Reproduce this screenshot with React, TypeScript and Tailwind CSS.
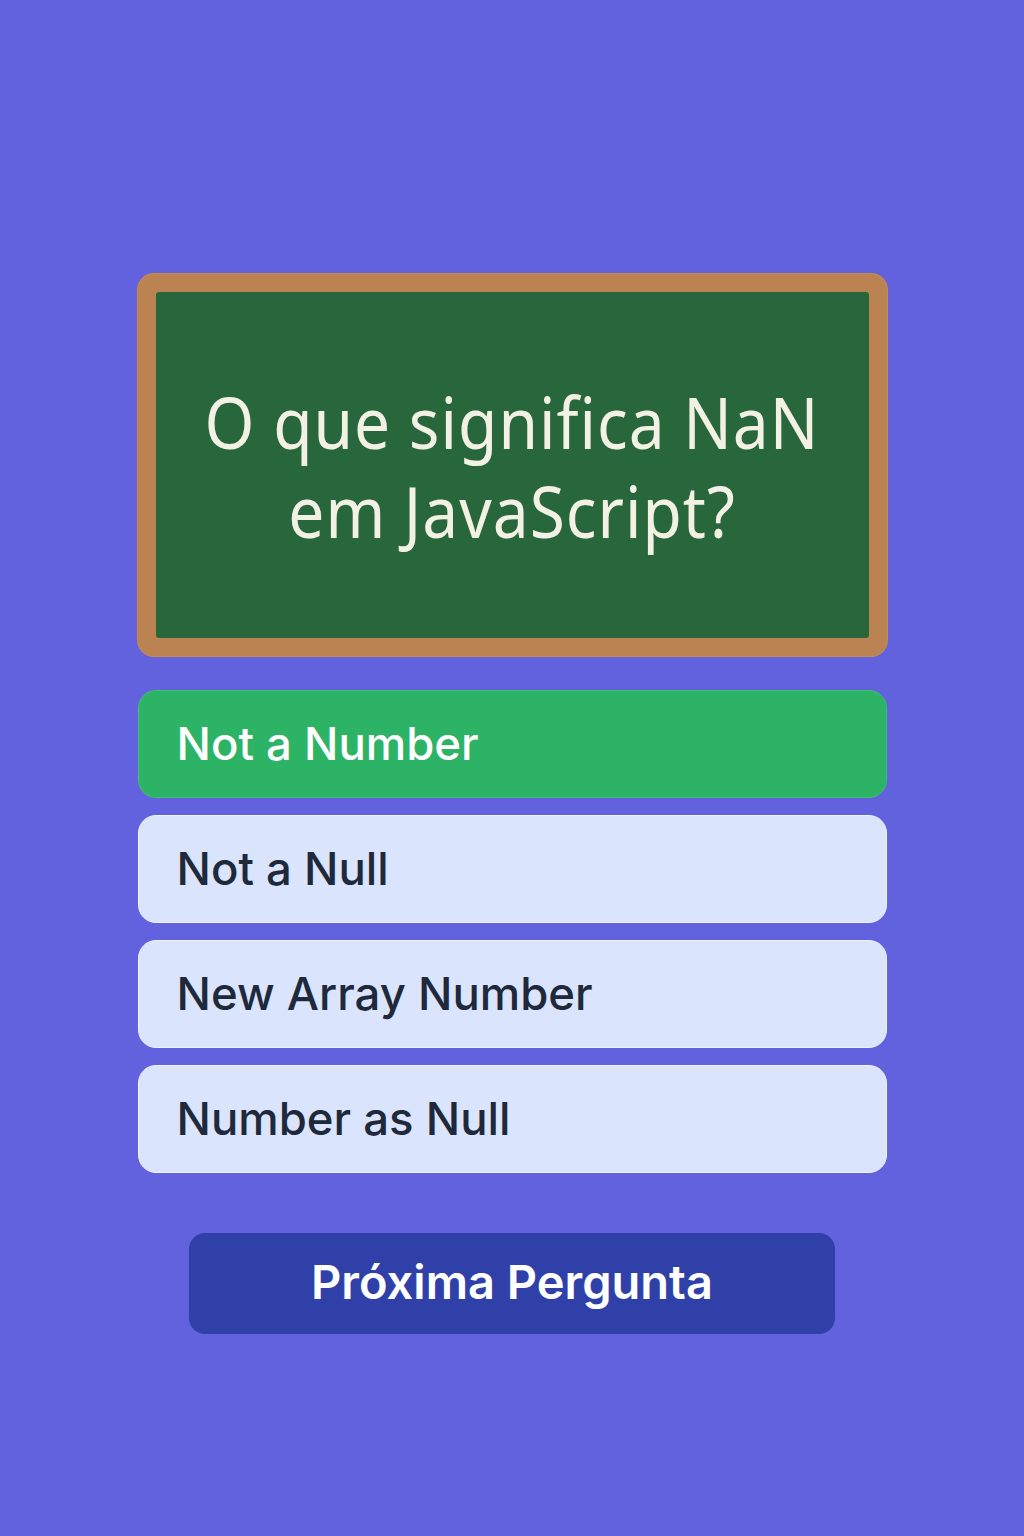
import React from "react";

const options = ["Not a Number", "Not a Null", "New Array Number", "Number as Null"];

export default function App() {
  return (
    <div className="min-h-[1536px] w-full bg-[#6262de] flex flex-col items-center pt-[274px]" style={{ fontFamily: "Inter, 'Noto Sans', sans-serif" }}>
      {/* quadro */}
      <div className="w-[749px] h-[382px] rounded-[16px] bg-[#bb8352] p-[18px] shadow-[0_0_0_1px_#c98a4f]">
        <div className="w-full h-full bg-[#28663c] rounded-[3px] flex items-center justify-center">
          <h1
            className="text-center text-[#f2f1e4] text-[64px] leading-[79px] tracking-[1px] pt-[2px] scale-y-[1.12]"
            style={{ fontFamily: "'Comic Sans MS', 'Noto Sans', 'DejaVu Sans', sans-serif" }}
          >
            O que significa NaN
            <br />
            em JavaScript?
          </h1>
        </div>
      </div>

      {/* opções */}
      <div className="w-[749px] mt-[34px] flex flex-col gap-[17px]">
        {options.map((opt, i) => (
          <button
            key={opt}
            className={
              i === 0
                ? "h-[108px] rounded-[18px] bg-[#2db366] border border-[#3fbf72] text-white text-left pl-[38px] text-[45.5px] font-medium"
                : "h-[108px] rounded-[18px] bg-[#dbe4fd] border border-[#eef2ff] text-[#1e293b] text-left pl-[38px] text-[45.5px] font-medium"
            }
          >
            {opt}
          </button>
        ))}
      </div>

      <button className="mt-[60px] w-[646px] h-[101px] rounded-[16px] bg-[#2f41a9] text-white text-[47px] font-semibold pb-[2px]">
        Próxima Pergunta
      </button>
    </div>
  );
}
